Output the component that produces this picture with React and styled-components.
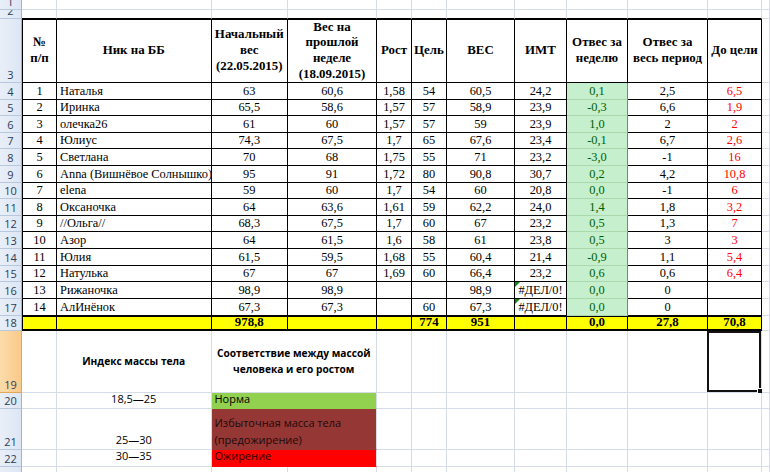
import React from 'react';
import styled, { createGlobalStyle, css } from 'styled-components';

const Global = createGlobalStyle`
  html, body { margin: 0; padding: 0; background: #fff; overflow: hidden; }
  #root { width: 770px; height: 472px; }
`;

const GRID = '#d5dbe7';

const Sheet = styled.div`
  display: grid;
  grid-template-columns: 22px 35px 154.5px 76.5px 89px 35px 35px 68px 52px 61px 80px 54px 8px;
  grid-template-rows: 10px 9px 64px repeat(14, 16.62px) 15.5px 62px 16px 41px 16.6px 20px;
  width: 770px;
  height: 472px;
  overflow: hidden;
  background: #fff;
  font-family: "Liberation Serif", "Times New Roman", serif;
  font-size: 12.4px;
  color: #000;
`;

const RowHead = styled.div`
  box-sizing: border-box;
  display: flex;
  align-items: flex-end;
  justify-content: center;
  overflow: hidden;
  background: ${p => (p.$selected ? 'linear-gradient(90deg, #fcdcaa, #f9c98a)' : 'linear-gradient(90deg, #e9eff8, #dce6f4)')};
  border-right: 1px solid #9fb5cf;
  border-bottom: 1px solid ${p => (p.$selected ? '#e3a75c' : '#b7c8dd')};
  font-family: "Open Sans", "Liberation Sans", sans-serif;
  font-size: 11px;
  line-height: 13px;
  color: #2b3d57;
  padding-bottom: 1px;
`;

const GridCell = styled.div`
  box-sizing: border-box;
  position: relative;
  border-right: 1px solid ${GRID};
  border-bottom: 1px solid ${p => (p.$tableTop ? '#000' : GRID)};
  background: #fff;
`;

const TCell = styled.div`
  box-sizing: border-box;
  position: relative;
  display: flex;
  align-items: flex-end;
  justify-content: ${p => (p.$left ? 'flex-start' : 'center')};
  padding: 0 ${p => (p.$left ? '3px' : '1px')};
  line-height: 15px;
  white-space: nowrap;
  overflow: hidden;
  border-right: 1px solid #000;
  border-bottom: 1px solid #000;
  ${p => p.$first && css`border-left: 1px solid #000;`}
  color: ${p => (p.$tone === 'red' ? '#ff0000' : p.$tone === 'green' ? '#006100' : '#000')};
  background: ${p => (p.$tone === 'green' ? '#c6efce' : '#fff')};
  ${p => p.$tone === 'green' && css`
    border-bottom-color: #a9d9ad;
    border-right-color: #6f8f72;
  `}
`;

const HeadCell = styled(TCell)`
  align-items: center;
  text-align: center;
  white-space: ${p => (p.$pre ? 'pre-line' : 'normal')};
  font-weight: bold;
  font-size: 12.9px;
  line-height: 15.7px;
  padding: 0 2px;
  border-top: 1px solid #000;
  overflow: visible;
`;

const TotalCell = styled(TCell)`
  background: #ffff00;
  font-weight: bold;
  font-size: 12.9px;
  border-top: 1px solid #000;
  border-bottom: 2px solid #000;
  align-items: center;
`;

const ErrMark = styled.span`
  position: absolute;
  top: 0;
  left: 0;
  width: 0;
  height: 0;
  border-top: 5px solid #108a10;
  border-right: 5px solid transparent;
`;

const LegendCell = styled.div`
  box-sizing: border-box;
  display: flex;
  grid-column: ${p => (p.$span ? `span ${p.$span}` : 'auto')};
  align-items: ${p => (p.$valign === 'center' ? 'center' : 'flex-end')};
  justify-content: ${p => (p.$align === 'left' ? 'flex-start' : 'center')};
  text-align: ${p => (p.$align === 'left' ? 'left' : 'center')};
  padding: 0 3px 1px;
  font-family: "Open Sans", "Liberation Sans", sans-serif;
  font-size: ${p => (p.$bold ? '10.2px' : '11px')};
  line-height: 16.5px;
  font-weight: ${p => (p.$bold ? 700 : 400)};
  white-space: pre;
  color: ${p => p.$color || '#000'};
  background: ${p => p.$bg || '#fff'};
  border-right: 1px solid ${GRID};
  border-bottom: 1px solid ${p => p.$bg || GRID};
`;

const Selection = styled.div`
  position: absolute;
  left: -1px;
  top: 0;
  right: 0;
  bottom: 0;
  border: 2px solid #111;
  pointer-events: none;
  &::after {
    content: '';
    position: absolute;
    right: -5px;
    bottom: -5px;
    width: 5px;
    height: 5px;
    background: #111;
    border: 1px solid #fff;
  }
`;

const headers = [
  '№\nп/п',
  'Ник на ББ',
  'Начальный вес (22.05.2015)',
  'Вес на прошлой неделе (18.09.2015)',
  'Рост',
  'Цель',
  'ВЕС',
  'ИМТ',
  'Отвес за неделю',
  'Отвес за весь период',
  'До цели',
];

const data = [
  ['1', 'Наталья', '63', '60,6', '1,58', '54', '60,5', '24,2', '0,1', '2,5', '6,5'],
  ['2', 'Иринка', '65,5', '58,6', '1,57', '57', '58,9', '23,9', '-0,3', '6,6', '1,9'],
  ['3', 'олечка26', '61', '60', '1,57', '57', '59', '23,9', '1,0', '2', '2'],
  ['4', 'Юлиус', '74,3', '67,5', '1,7', '65', '67,6', '23,4', '-0,1', '6,7', '2,6'],
  ['5', 'Светлана', '70', '68', '1,75', '55', '71', '23,2', '-3,0', '-1', '16'],
  ['6', 'Anna (Вишнёвое Солнышко)', '95', '91', '1,72', '80', '90,8', '30,7', '0,2', '4,2', '10,8'],
  ['7', 'elena', '59', '60', '1,7', '54', '60', '20,8', '0,0', '-1', '6'],
  ['8', 'Оксаночка', '64', '63,6', '1,61', '59', '62,2', '24,0', '1,4', '1,8', '3,2'],
  ['9', '//Ольга//', '68,3', '67,5', '1,7', '60', '67', '23,2', '0,5', '1,3', '7'],
  ['10', 'Азор', '64', '61,5', '1,6', '58', '61', '23,8', '0,5', '3', '3'],
  ['11', 'Юлия', '61,5', '59,5', '1,68', '55', '60,4', '21,4', '-0,9', '1,1', '5,4'],
  ['12', 'Натулька', '67', '67', '1,69', '60', '66,4', '23,2', '0,6', '0,6', '6,4'],
  ['13', 'Рижаночка', '98,9', '98,9', '', '', '98,9', '#ДЕЛ/0!', '0,0', '0', ''],
  ['14', 'АлИнёнок', '67,3', '67,3', '', '60', '67,3', '#ДЕЛ/0!', '0,0', '0', ''],
];

const totals = ['', '', '978,8', '', '', '774', '951', '', '0,0', '27,8', '70,8'];

const toneFor = i => (i === 8 ? 'green' : i === 10 ? 'red' : undefined);

function BlankRow({ label, tableTop }) {
  return (
    <>
      <RowHead>{label}</RowHead>
      {Array.from({ length: 12 }, (_, i) => (
        <GridCell key={i} $tableTop={tableTop && i < 11} />
      ))}
    </>
  );
}

export default function App() {
  return (
    <>
      <Global />
      <Sheet>
        <BlankRow label="1" />
        <BlankRow label="2" tableTop />

        <RowHead>3</RowHead>
        {headers.map((h, i) => (
          <HeadCell key={i} $first={i === 0} $pre={h.includes('\n')}>
            {h}
          </HeadCell>
        ))}
        <GridCell />

        {data.map((row, r) => (
          <React.Fragment key={r}>
            <RowHead>{r + 4}</RowHead>
            {row.map((v, i) => (
              <TCell key={i} $first={i === 0} $left={i === 1} $tone={toneFor(i)}>
                {v.startsWith('#') && <ErrMark />}
                {v}
              </TCell>
            ))}
            <GridCell />
          </React.Fragment>
        ))}

        <RowHead>18</RowHead>
        {totals.map((v, i) => (
          <TotalCell key={i} $first={i === 0}>
            {v}
          </TotalCell>
        ))}
        <GridCell />

        <RowHead $selected>19</RowHead>
        <GridCell />
        <LegendCell $bold $valign="center">Индекс массы тела</LegendCell>
        <LegendCell $bold $valign="center" $span={2}>
          {'Соответствие между массой\nчеловека и его ростом'}
        </LegendCell>
        {Array.from({ length: 6 }, (_, i) => (
          <GridCell key={i} />
        ))}
        <GridCell>
          <Selection />
        </GridCell>
        <GridCell />

        <RowHead>20</RowHead>
        <GridCell />
        <LegendCell>18,5—25</LegendCell>
        <LegendCell $span={2} $align="left" $bg="#92d050">Норма</LegendCell>
        {Array.from({ length: 8 }, (_, i) => (
          <GridCell key={i} />
        ))}

        <RowHead>21</RowHead>
        <GridCell />
        <LegendCell>25—30</LegendCell>
        <LegendCell $span={2} $align="left" $bg="#953735" $color="#1c0a0a">
          {'Избыточная масса тела\n(предожирение)'}
        </LegendCell>
        {Array.from({ length: 8 }, (_, i) => (
          <GridCell key={i} />
        ))}

        <RowHead>22</RowHead>
        <GridCell />
        <LegendCell>30—35</LegendCell>
        <LegendCell $span={2} $align="left" $bg="#ff0000" $color="#2a0000">Ожирение</LegendCell>
        {Array.from({ length: 8 }, (_, i) => (
          <GridCell key={i} />
        ))}

        <BlankRow label="" />
      </Sheet>
    </>
  );
}
